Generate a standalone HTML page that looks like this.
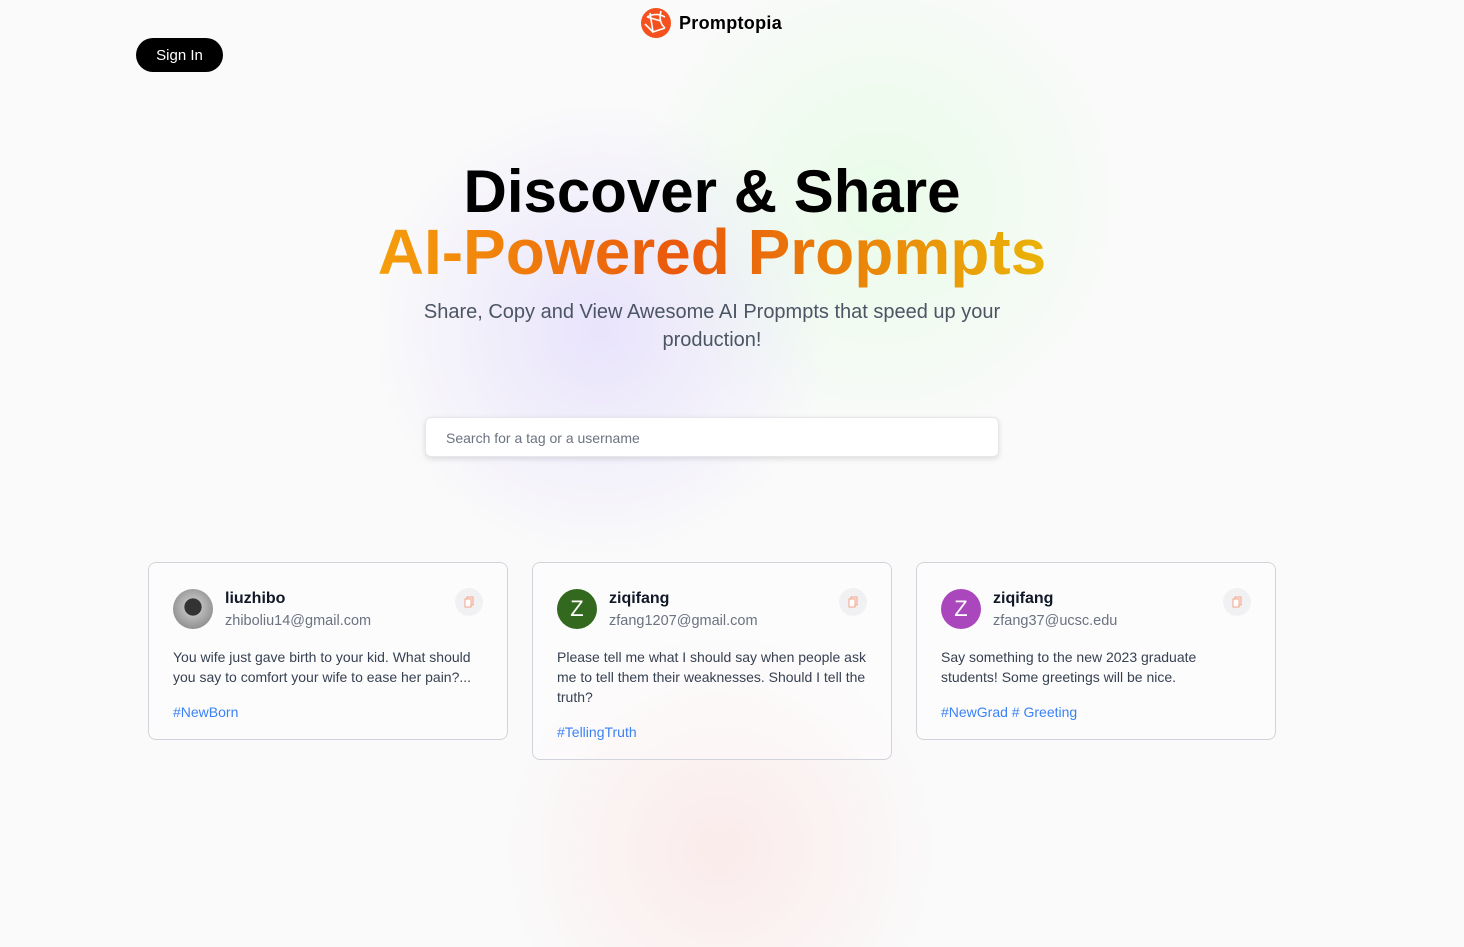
<!DOCTYPE html>
<html><head><meta charset="utf-8"><style>
*{box-sizing:border-box;margin:0;padding:0}
body{width:1464px;height:947px;overflow:hidden;font-family:"Liberation Sans",sans-serif;background:#fafafa;position:relative}
.bg{position:absolute;inset:0;background:
radial-gradient(circle at 600px 330px,rgba(200,185,255,.35),transparent 230px),
radial-gradient(circle at 880px 200px,rgba(200,255,200,.35),transparent 250px),
radial-gradient(circle at 720px 850px,rgba(255,200,200,.3),transparent 220px);}
.logo{position:absolute;left:641px;top:8px;display:flex;align-items:center;gap:8px;font-weight:bold;font-size:18px;color:#000;letter-spacing:.3px}
.btn{position:absolute;left:136px;top:38px;width:87px;height:34px;border-radius:17px;background:#000;color:#fff;font-size:15px;display:flex;align-items:center;justify-content:center}
h1{position:absolute;left:0;right:40px;top:162px;text-align:center;font-size:60px;line-height:60px;font-weight:bold;letter-spacing:0px;color:#000}
.g{font-size:64px;background:linear-gradient(90deg,#f59e0b,#ea580c 45%,#eab308);-webkit-background-clip:text;color:transparent}
.sub{position:absolute;left:417px;width:590px;top:298px;text-align:center;font-size:20px;line-height:28px;color:#4b5563}
.search{position:absolute;left:425px;top:417px;width:574px;height:40px;background:#fff;border:1px solid #e5e7eb;border-radius:6px;box-shadow:0 2px 6px rgba(0,0,0,.12);font-size:14px;color:#6b7280;padding:12px 20px}
.card{position:absolute;top:562px;width:360px;border:1px solid #d1d5db;border-radius:8px;background:rgba(255,255,255,.35);padding:26px 24px 20px}
.hd{display:flex;align-items:center;gap:12px}
.av{width:40px;height:40px;border-radius:50%;color:#fff;font-size:22px;display:flex;align-items:center;justify-content:center}
.n{font-weight:bold;font-size:16px;color:#111827}
.e{font-size:14.5px;color:#6b7280;margin-top:5px}
.cp{position:absolute;right:24px;top:25px;width:28px;height:28px;border-radius:50%;background:#f1f1f3;display:flex;align-items:center;justify-content:center}
.t{font-size:14px;line-height:20px;color:#374151;margin-top:18px}
.tag{font-size:14px;color:#3b82f6;margin-top:17px}
</style></head><body><div class="bg"></div>
<div class="logo"><svg width="30" height="30" viewBox="0 0 30 30"><circle cx="15" cy="15" r="15" fill="#f4511e"/><g stroke="#fff" stroke-width="1.6" fill="none"><path d="M6 9 Q15 4 24 9"/><path d="M9 5 L12 24 L24 20"/><path d="M4 16 L12 24"/><path d="M20 3 Q17 14 24 20"/><path d="M6 9 L20 13"/></g></svg>Promptopia</div>
<div class="btn">Sign In</div>
<h1>Discover &amp; Share<br><span class="g">AI-Powered Propmpts</span></h1>
<div class="sub">Share, Copy and View Awesome AI Propmpts that speed up your production!</div>
<div class="search">Search for a tag or a username</div>
<div class="card" style="left:148px;height:178px"><div class="hd"><div class="av" style="background:radial-gradient(circle at 50% 45%,#333 28%,#bbb 30%,#777)"></div><div><div class="n">liuzhibo</div><div class="e">zhiboliu14@gmail.com</div></div></div><div class="cp"><svg width="10" height="12"><rect x="3" y="1" width="6" height="8" fill="none" stroke="#f3a58a"/><rect x="1" y="3" width="6" height="8" fill="#fff" stroke="#f3a58a"/></svg></div><div class="t">You wife just gave birth to your kid. What should you say to comfort your wife to ease her pain?...</div><div class="tag">#NewBorn</div></div>
<div class="card" style="left:532px;height:198px"><div class="hd"><div class="av" style="background:#33691e">Z</div><div><div class="n">ziqifang</div><div class="e">zfang1207@gmail.com</div></div></div><div class="cp"><svg width="10" height="12"><rect x="3" y="1" width="6" height="8" fill="none" stroke="#f3a58a"/><rect x="1" y="3" width="6" height="8" fill="#fff" stroke="#f3a58a"/></svg></div><div class="t">Please tell me what I should say when people ask me to tell them their weaknesses. Should I tell the truth?</div><div class="tag">#TellingTruth</div></div>
<div class="card" style="left:916px;height:178px"><div class="hd"><div class="av" style="background:#ab47bc">Z</div><div><div class="n">ziqifang</div><div class="e">zfang37@ucsc.edu</div></div></div><div class="cp"><svg width="10" height="12"><rect x="3" y="1" width="6" height="8" fill="none" stroke="#f3a58a"/><rect x="1" y="3" width="6" height="8" fill="#fff" stroke="#f3a58a"/></svg></div><div class="t">Say something to the new 2023 graduate students! Some greetings will be nice.</div><div class="tag">#NewGrad # Greeting</div></div>
</body></html>
